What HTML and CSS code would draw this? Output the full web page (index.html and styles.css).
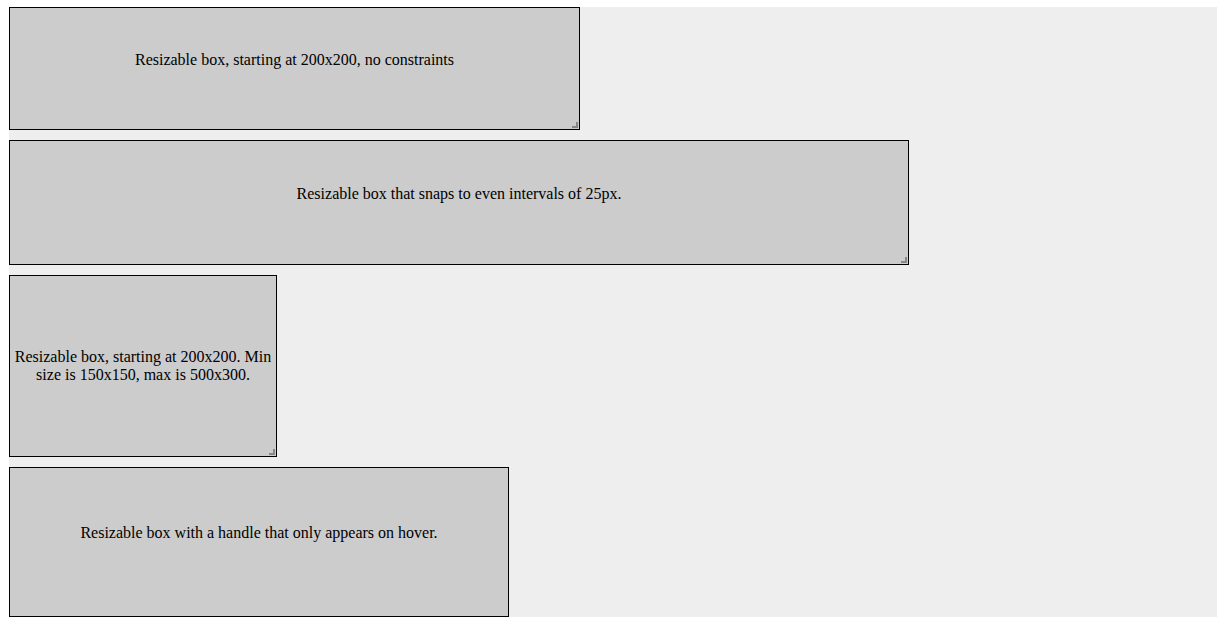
FILE: index.html
```html
<!DOCTYPE html>
<html>
<head>
<meta charset="utf-8">
<link rel="stylesheet" href="styles.css">
</head>
<body>
<div class="layout">
  <div class="box box-a">
    <span class="label">Resizable box, starting at 200x200, no constraints</span>
    <span class="handle"></span>
  </div>
  <div class="box box-b">
    <span class="label">Resizable box that snaps to even intervals of 25px.</span>
    <span class="handle"></span>
  </div>
  <div class="box box-c box-centered">
    <span class="label">Resizable box, starting at 200x200. Min size is 150x150, max is 500x300.</span>
    <span class="handle"></span>
  </div>
  <div class="box box-d">
    <span class="label">Resizable box with a handle that only appears on hover.</span>
  </div>
</div>
</body>
</html>
```
FILE: styles.css
```css
html, body {
  margin: 0;
  padding: 0;
  background: #fff;
}
body {
  font-family: "Liberation Serif", "Times New Roman", serif;
  font-size: 16px;
  color: #000;
}
.layout {
  margin: 7px 1px 0 9px;
  height: 610px;
  background: #eeeeee;
  display: flex;
  flex-direction: column;
  align-items: flex-start;
  gap: 10px;
  overflow: hidden;
}
.box {
  position: relative;
  box-sizing: border-box;
  flex: none;
  background: #cccccc;
  border: 1px solid #000;
  display: flex;
  align-items: center;
  justify-content: center;
  text-align: center;
  padding-bottom: 18px;
  line-height: 18px;
}
.box-centered {
  padding-bottom: 0;
}
.box-a { width: 571px; height: 123px; }
.box-b { width: 900px; height: 125px; }
.box-c { width: 268px; height: 182px; }
.box-d { width: 500px; height: 150px; }
.handle {
  position: absolute;
  right: 1px;
  bottom: 1px;
  width: 6px;
  height: 6px;
  border-right: 2px solid #888;
  border-bottom: 2px solid #888;
  box-sizing: border-box;
}
```
